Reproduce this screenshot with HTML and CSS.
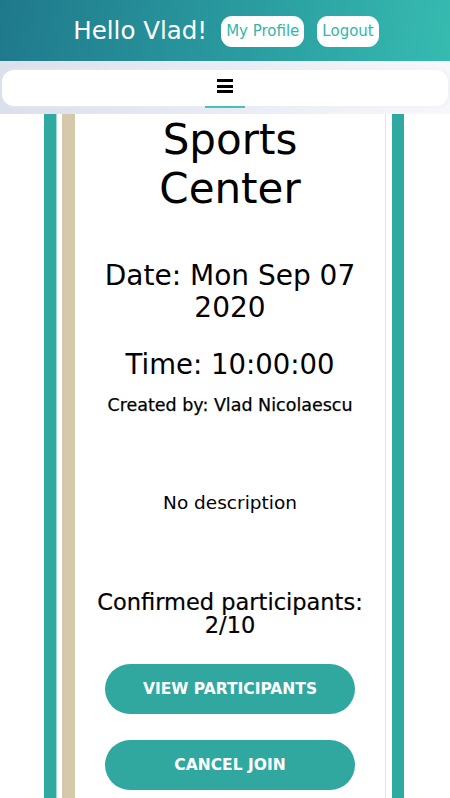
FILE: index.html
```html
<!DOCTYPE html>
<html lang="en">
<head>
<meta charset="utf-8">
<title>Sports Center</title>
<link rel="stylesheet" href="styles.css">
</head>
<body>
<header class="topbar">
  <span class="greeting">Hello Vlad!</span>
  <a class="top-btn" href="#">My Profile</a>
  <a class="top-btn" href="#">Logout</a>
</header>
<nav class="navband">
  <div class="navpill">
    <a class="burger" href="#" aria-label="Menu">
      <span class="bar"></span><span class="bar"></span><span class="bar"></span>
    </a>
  </div>
</nav>
<main class="frame">
  <section class="card">
    <h1 class="title">Sports Center</h1>
    <h2 class="date">Date: Mon Sep 07 2020</h2>
    <h2 class="time">Time: 10:00:00</h2>
    <p class="creator">Created by: Vlad Nicolaescu</p>
    <p class="desc">No description</p>
    <h3 class="confirmed">Confirmed participants: 2/10</h3>
    <a class="action" href="#">VIEW PARTICIPANTS</a>
    <a class="action" href="#">CANCEL JOIN</a>
  </section>
</main>
</body>
</html>
```
FILE: styles.css
```css
* { box-sizing: border-box; }
html, body { margin: 0; padding: 0; }
body {
  width: 450px;
  background: #fff;
  font-family: "DejaVu Sans", "Noto Sans", sans-serif;
  color: #000;
}
a { text-decoration: none; }

.topbar {
  height: 61px;
  display: flex;
  align-items: center;
  justify-content: center;
  gap: 13px;
  background: linear-gradient(100deg, #1f798b 0%, #2a9ca0 55%, #36bbb0 100%);
  padding-left: 2px;
}
.greeting {
  color: #fff;
  font-size: 24.5px;
  line-height: 30px;
  margin-right: 1px;
}
.top-btn {
  display: flex;
  align-items: center;
  justify-content: center;
  height: 31px;
  padding: 0 5px;
  background: #fff;
  border-radius: 11px;
  color: #34b5ac;
  font-size: 15px;
  margin-top: 1px;
}

.navband {
  height: 53px;
  padding: 9px 2px 0 2px;
  background: linear-gradient(90deg, #dbe0ed 0%, #e9ecf4 50%, #f7f8fb 100%);
}
.navpill {
  height: 36px;
  background: #fff;
  border-radius: 12px;
  display: flex;
  justify-content: center;
  box-shadow: 2px 0 4px rgba(235, 238, 245, 0.8);
}
.burger {
  width: 40px;
  height: 38px;
  border-bottom: 2px solid #4bbfb5;
  display: flex;
  flex-direction: column;
  align-items: center;
  padding-top: 9px;
  gap: 2.5px;
}
.bar {
  display: block;
  width: 16px;
  height: 3px;
  background: #000;
}

.frame {
  margin-left: 44px;
  width: 360px;
  min-height: 684px;
  border-left: 12px solid #30a9a0;
  border-right: 12.5px solid #30a9a0;
  padding: 0 6px 0 6px;
  box-shadow: inset 1px 0 0 #9fdbd5;
  display: flex;
}
.card {
  flex: 1;
  border-left: 13px solid #d5c9a9;
  border-right: 1px solid #dfe6e6;
  background: #fff;
  text-align: center;
  display: flex;
  flex-direction: column;
  align-items: center;
  padding: 1px 4px 20px 4px;
}
.title {
  margin: 0;
  max-width: 240px;
  font-size: 42px;
  font-weight: 400;
  line-height: 49px;
}
.date {
  margin: 47px 0 0 0;
  font-size: 28px;
  font-weight: 400;
  line-height: 32px;
}
.time {
  margin: 24px 0 0 0;
  font-size: 27.5px;
  font-weight: 400;
  line-height: 32px;
}
.creator {
  margin: 15px 0 0 0;
  font-size: 17.5px;
  line-height: 20px;
  -webkit-text-stroke: 0.25px #000;
}
.desc {
  margin: 76px 0 0 0;
  font-size: 18.5px;
  line-height: 24px;
}
.confirmed {
  margin: 76px 0 0 0;
  font-size: 22.5px;
  font-weight: 400;
  line-height: 23px;
  -webkit-text-stroke: 0.2px #000;
}
.action {
  margin-top: 26px;
  width: 250px;
  height: 50px;
  border-radius: 25px;
  background: #30a8a0;
  color: #fff;
  font-weight: 700;
  font-size: 15.5px;
  display: flex;
  align-items: center;
  justify-content: center;
  flex-shrink: 0;
}
.confirmed + .action { margin-top: 27px; }
```
